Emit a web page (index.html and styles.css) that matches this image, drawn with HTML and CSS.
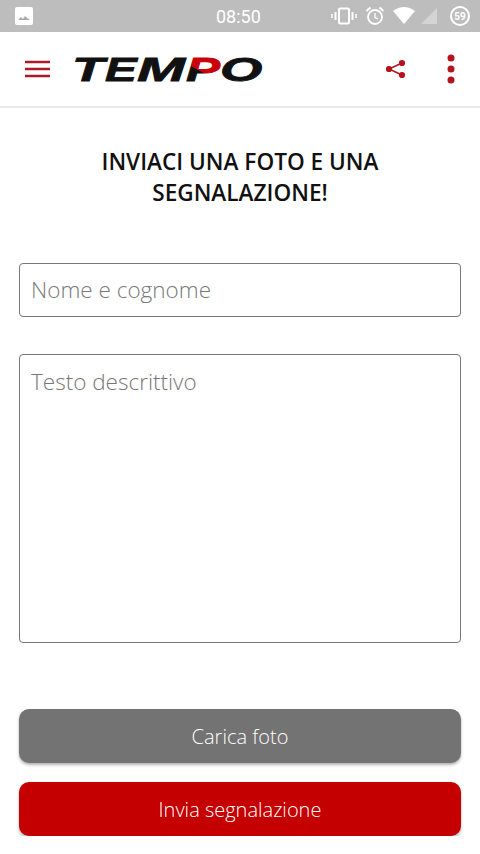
FILE: index.html
```html
<!DOCTYPE html>
<html lang="it">

<head>
    <meta charset="UTF-8">
    <meta name="viewport" content="width=device-width, initial-scale=1.0">
    <title>Tempo</title>
    <link rel="stylesheet" href="styles.css">
</head>

<body>
    <div class="status-bar">
        <svg class="status-pic" width="18" height="18" viewBox="0 0 18 18">
            <rect width="18" height="18" rx="2" fill="#fff" />
            <path d="M3 13l3-3 2 2 2-3 2 2 3 2z" fill="#aaa" />
        </svg>
        <span class="status-time">08:50</span>
        <div class="status-icons">
            <svg class="icon-vibrate" width="26" height="20" viewBox="0 0 26 20">
                <rect x="8" y="2.500" width="10" height="15" rx="1.500" fill="none" stroke="#fff" stroke-width="2" />
                <path d="M4.500 6v8M21.500 6v8" stroke="#fff" stroke-width="2" />
                <path d="M1 8v4M25 8v4" stroke="#fff" stroke-width="1.500" />
            </svg>
            <svg class="icon-alarm" width="20" height="20" viewBox="0 0 20 20">
                <circle cx="10" cy="11" r="7" fill="none" stroke="#fff" stroke-width="1.800" />
                <path d="M10 7v4.500l3 1.500" fill="none" stroke="#fff" stroke-width="1.300" />
                <path d="M1.500 5l4-3.500M18.500 5l-4-3.500" stroke="#fff" stroke-width="2" />
            </svg>
            <svg class="icon-wifi" width="22" height="18" viewBox="0 0 22 18">
                <path d="M0 4q11-8 22 0L11 17z" fill="#fff" />
            </svg>
            <svg class="icon-signal" width="18" height="18" viewBox="0 0 18 18">
                <path d="M1 17L17 1v16z" fill="#d4d4d4" />
            </svg>
            <div class="battery">
                <span class="battery-num">59</span>
            </div>
        </div>
    </div>

    <header class="toolbar">
        <svg class="menu-icon" width="26" height="18" viewBox="0 0 26 18">
            <path d="M0 2h25M0 9h25M0 16h25" stroke="#a81c28" stroke-width="2.400" />
        </svg>
        <svg class="logo" width="196" height="40" viewBox="0 0 196 40">
            <defs>
                <linearGradient id="logoP" x1="0.700" y1="0" x2="0.200" y2="1">
                    <stop offset="0.550" stop-color="#c8000a" />
                    <stop offset="0.560" stop-color="#111" />
                </linearGradient>
            </defs>
            <text class="logo-letter" transform="translate(2 32) scale(1.550 1)">T</text>
            <text class="logo-letter" transform="translate(35 32) scale(1.400 1)">E</text>
            <text class="logo-letter" transform="translate(67 32) scale(1.700 1)">M</text>
            <text class="logo-letter logo-p" transform="translate(116 32) scale(1.500 1)">P</text>
            <text class="logo-letter" transform="translate(150 32) scale(1.600 1)">O</text>
        </svg>
        <svg class="share-icon" width="22" height="22" viewBox="0 0 22 22">
            <path d="M17 5L4 11l13 6" fill="none" stroke="#b5121b" stroke-width="1.500" />
            <circle cx="17" cy="5" r="3.100" fill="#b5121b" />
            <circle cx="4" cy="11" r="3.100" fill="#b5121b" />
            <circle cx="17" cy="17" r="3.100" fill="#b5121b" />
        </svg>
        <svg class="more-icon" width="8" height="30" viewBox="0 0 8 30">
            <circle cx="4" cy="4" r="3.500" fill="#b5121b" />
            <circle cx="4" cy="15" r="3.500" fill="#b5121b" />
            <circle cx="4" cy="26" r="3.500" fill="#b5121b" />
        </svg>
    </header>

    <main class="content">
        <h1 class="title">INVIACI UNA FOTO E UNA SEGNALAZIONE!</h1>
        <form class="report-form">
            <input class="field field-name" type="text" placeholder="Nome e cognome">
            <textarea class="field field-text" placeholder="Testo descrittivo"></textarea>
            <button class="btn btn-grey" type="button">Carica foto</button>
            <button class="btn btn-red" type="button">Invia segnalazione</button>
        </form>
    </main>
</body>

</html>
```

FILE: styles.css
```css
* {
    box-sizing: border-box;
}

body {
    margin: 0;
    background-color: #fff;
    font-family: "Open Sans", sans-serif;
}

.status-bar {
    height: 32px;
    background-color: #bdbdbd;
    display: flex;
    align-items: center;
    padding: 0 10px 0 15px;
}

.status-time {
    margin-left: 183px;
    font-family: Roboto, sans-serif;
    font-size: 18px;
    color: #fff;
}

.status-icons {
    margin-left: auto;
    display: flex;
    align-items: center;
}

.icon-alarm,
.icon-wifi {
    margin-left: 8px;
}

.icon-signal {
    margin-left: 5px;
}

.battery {
    width: 20px;
    height: 20px;
    margin-left: 12px;
    border: 2px solid #fff;
    border-radius: 50%;
    display: flex;
    align-items: center;
    justify-content: center;
}

.battery-num {
    font-family: Roboto, sans-serif;
    font-size: 10px;
    font-weight: bold;
    color: #fff;
}

.toolbar {
    height: 76px;
    display: flex;
    align-items: center;
    padding: 0 25px;
    border-bottom: 2px solid #e8e8e8;
}

.logo {
    margin-left: 19px;
}

.logo-letter {
    font-family: "Liberation Sans", sans-serif;
    font-size: 34px;
    font-weight: bold;
    font-style: italic;
    fill: #111;
    stroke: #111;
    stroke-width: 0.800px;
}

.logo-p {
    fill: url(#logoP);
    stroke: url(#logoP);
}

.share-icon {
    margin-left: auto;
}

.more-icon {
    margin-left: 40px;
}

.content {
    padding: 0 19px;
}

.title {
    margin: 38px 30px 0;
    font-size: 22.600px;
    line-height: 31px;
    font-weight: 600;
    text-align: center;
    color: #111;
}

.report-form {
    display: flex;
    flex-direction: column;
}

.field {
    width: 100%;
    border: 1.500px solid #777;
    border-radius: 4px;
    padding: 0 11px;
    font-family: "Open Sans", sans-serif;
    font-size: 22.500px;
    font-weight: 300;
    color: #333;
    display: block;
    outline: none;
}

.field::placeholder {
    color: #777;
    opacity: 1;
}

.field-name {
    margin-top: 55px;
    height: 54px;
    padding-bottom: 2px;
}

.field-text {
    margin-top: 37px;
    height: 289px;
    padding-top: 11px;
    resize: none;
}

.btn {
    height: 54px;
    border: none;
    border-radius: 10px;
    font-family: "Open Sans", sans-serif;
    font-size: 20px;
    font-weight: 300;
    color: #fff;
    box-shadow: 0 2px 3px rgba(0, 0, 0, 0.3);
}

.btn-grey {
    margin-top: 66px;
    background-color: #737373;
}

.btn-red {
    margin-top: 19px;
    background-color: #c40000;
}
```
